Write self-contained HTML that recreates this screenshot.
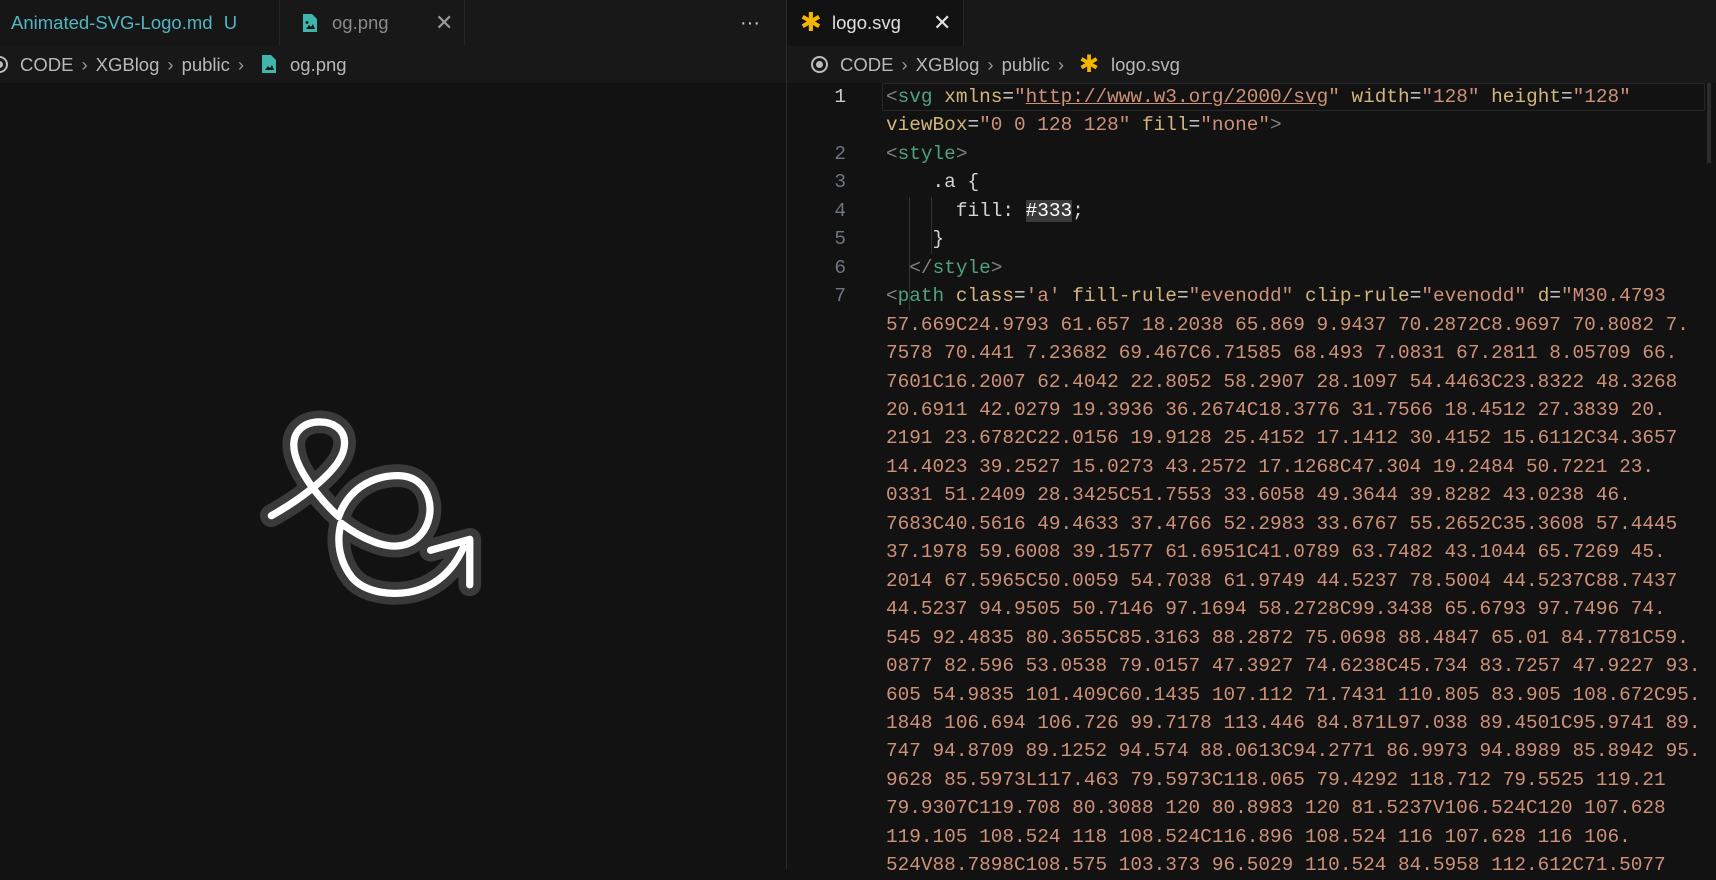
<!DOCTYPE html>
<html><head><meta charset="utf-8"><style>
*{margin:0;padding:0;box-sizing:border-box}
body{width:1716px;height:869px;background:#121212;overflow:hidden;position:relative;font-family:"Liberation Sans",sans-serif;color:#ccc}
.abs{position:absolute}
.tabbar{left:0;top:0;width:1716px;height:46px;background:#181818}
.tab{position:absolute;top:0;height:46px;font-size:18.5px;line-height:46px;white-space:nowrap}
.bc{left:0;top:46px;width:1716px;height:37px;background:#181818;font-size:18.5px;line-height:37px;color:#b8b8b8;white-space:nowrap}
.code{font-family:"Liberation Mono",monospace;font-size:19.4px;line-height:28.45px;white-space:pre;position:absolute;left:886px;top:83px;color:#d4d4d4}
.ln{font-family:"Liberation Mono",monospace;font-size:19.4px;line-height:28.45px;white-space:pre;position:absolute;left:800px;width:46px;text-align:right;top:83px;color:#6e7681}
.p{color:#808080}.t{color:#4ea27d}.a{color:#d3b57e}.s{color:#ce9178}
.sep{color:#999;margin:0 8px}
</style></head><body>
<div class="abs tabbar"></div>
<div class="tab" style="left:0;width:279px;background:#161616;color:#4fb6c2;padding-left:11px">Animated-SVG-Logo.md <span style="margin-left:6px">U</span></div>
<div class="abs" style="left:279px;top:0;width:1px;height:46px;background:#252525"></div>
<div class="tab" style="left:280px;width:184px;color:#8a8a8a">
 <svg class="abs" style="left:22px;top:13px" width="16" height="20" viewBox="0 0 16 20"><path d="M1 1h9l5 5v13H1z" fill="#3fb6ad"/><path d="M4 16l3-4 2 2 2-3 2 5z M5 8a1.5 1.5 0 1 0 .1 0" fill="#161616"/></svg>
 <span class="abs" style="left:52px">og.png</span><span class="abs" style="left:155px;color:#9a9a9a;font-size:22px">✕</span></div>
<div class="abs" style="left:464px;top:0;width:1px;height:46px;background:#252525"></div>
<div class="tab" style="left:740px;color:#ccc;font-size:20px">···</div>
<div class="abs" style="left:786px;top:0;width:1px;height:869px;background:#2a2a2a"></div>
<div class="tab" style="left:787px;width:176px;background:#121212;color:#e0e0e0">
 <span class="abs" style="left:13px;color:#f5b400;font-size:26px;top:-1px">✱</span>
 <span class="abs" style="left:45px">logo.svg</span><span class="abs" style="left:146px;font-size:22px">✕</span></div>
<div class="abs" style="left:963px;top:0;width:1px;height:46px;background:#252525"></div>

<div class="abs bc" style="width:786px"><span class="abs" style="left:-9px;top:10px;width:17px;height:17px;border:2px solid #bbb;border-radius:50%"></span><span class="abs" style="left:-4px;top:15px;width:7px;height:7px;background:#bbb;border-radius:50%"></span>
<span class="abs" style="left:20px">CODE<span class="sep">›</span>XGBlog<span class="sep">›</span>public<span class="sep">›</span></span>
<svg class="abs" style="left:261px;top:8px" width="16" height="20" viewBox="0 0 16 20"><path d="M1 1h9l5 5v13H1z" fill="#3fb6ad"/><path d="M4 16l3-4 2 2 2-3 2 5z" fill="#181818"/></svg>
<span class="abs" style="left:290px">og.png</span></div>
<div class="abs bc" style="left:787px;width:929px"><span class="abs" style="left:24px;top:10px;width:17px;height:17px;border:2px solid #bbb;border-radius:50%"></span><span class="abs" style="left:29px;top:15px;width:7px;height:7px;background:#bbb;border-radius:50%"></span>
<span class="abs" style="left:53px">CODE<span class="sep">›</span>XGBlog<span class="sep">›</span>public<span class="sep">›</span></span>
<span class="abs" style="left:292px;color:#f5b400;font-size:24px">✱</span><span class="abs" style="left:324px">logo.svg</span></div>

<svg class="abs" style="left:0;top:83px" width="786" height="786">
<g transform="translate(255,308) scale(1.82)" fill="none" stroke-linecap="round" stroke-linejoin="round">
<g id="lg">
<path d="M9,68.5 C18,63.5 27,57.5 35,50.5 C44,42.5 49.5,35.5 49.2,28 C49,21 43,16.8 35,17 C27,17.2 21.3,22 21.3,29.5 C21.3,37.5 26.5,46.5 33.5,55.5 C37,60 41,64.5 46,69 C50.5,56 62,46.5 78.5,46.5 C88,46.5 93.5,52 95.3,58.8 C97.3,65.5 95.8,73.5 91,79 C84.5,86.3 75,86.5 65.7,83 C59.5,80.7 53,77 47.3,72.6 C44.5,83 46.5,94 53.5,102.7 C59.5,109.5 71.5,112.5 84.2,110.6 C96,108.7 107.5,101.5 114.5,86 M96.5,87.5 L118,81.5 L118,106.5"/>
</g>
<use href="#lg" stroke="#3a3a3a" stroke-width="12.5"/>
<use href="#lg" stroke="#ffffff" stroke-width="4"/>
</g></svg>

<div class="abs" style="left:882px;top:83px;width:823px;height:28px;border:1px solid #262626"></div>
<div class="abs" style="left:909px;top:197px;width:1px;height:114px;background:#333"></div>
<div class="abs" style="left:931px;top:197px;width:1px;height:57px;background:#333"></div>
<div class="abs" style="left:1707px;top:83px;width:4px;height:80px;background:#2c2c2c"></div>

<div class="ln"><span style="color:#ccc">1</span>

2
3
4
5
6
7</div>
<div class="code"><span class="p">&lt;</span><span class="t">svg</span> <span class="a">xmlns</span>=<span class="s">"<span style="text-decoration:underline">http://www.w3.org/2000/svg</span>"</span> <span class="a">width</span>=<span class="s">"128"</span> <span class="a">height</span>=<span class="s">"128"</span>
<span class="a">viewBox</span>=<span class="s">"0 0 128 128"</span> <span class="a">fill</span>=<span class="s">"none"</span><span class="p">&gt;</span>
<span class="p">&lt;</span><span class="t">style</span><span class="p">&gt;</span>
    .a {
      fill: <span style="background:#3a3a3a;color:#fff">#333</span>;
    }
  <span class="p">&lt;/</span><span class="t">style</span><span class="p">&gt;</span>
<span class="p">&lt;</span><span class="t">path</span> <span class="a">class</span>=<span class="s">'a'</span> <span class="a">fill-rule</span>=<span class="s">"evenodd"</span> <span class="a">clip-rule</span>=<span class="s">"evenodd"</span> <span class="a">d</span>=<span class="s">"M30.4793
57.669C24.9793 61.657 18.2038 65.869 9.9437 70.2872C8.9697 70.8082 7.
7578 70.441 7.23682 69.467C6.71585 68.493 7.0831 67.2811 8.05709 66.
7601C16.2007 62.4042 22.8052 58.2907 28.1097 54.4463C23.8322 48.3268
20.6911 42.0279 19.3936 36.2674C18.3776 31.7566 18.4512 27.3839 20.
2191 23.6782C22.0156 19.9128 25.4152 17.1412 30.4152 15.6112C34.3657
14.4023 39.2527 15.0273 43.2572 17.1268C47.304 19.2484 50.7221 23.
0331 51.2409 28.3425C51.7553 33.6058 49.3644 39.8282 43.0238 46.
7683C40.5616 49.4633 37.4766 52.2983 33.6767 55.2652C35.3608 57.4445
37.1978 59.6008 39.1577 61.6951C41.0789 63.7482 43.1044 65.7269 45.
2014 67.5965C50.0059 54.7038 61.9749 44.5237 78.5004 44.5237C88.7437
44.5237 94.9505 50.7146 97.1694 58.2728C99.3438 65.6793 97.7496 74.
545 92.4835 80.3655C85.3163 88.2872 75.0698 88.4847 65.01 84.7781C59.
0877 82.596 53.0538 79.0157 47.3927 74.6238C45.734 83.7257 47.9227 93.
605 54.9835 101.409C60.1435 107.112 71.7431 110.805 83.905 108.672C95.
1848 106.694 106.726 99.7178 113.446 84.871L97.038 89.4501C95.9741 89.
747 94.8709 89.1252 94.574 88.0613C94.2771 86.9973 94.8989 85.8942 95.
9628 85.5973L117.463 79.5973C118.065 79.4292 118.712 79.5525 119.21
79.9307C119.708 80.3088 120 80.8983 120 81.5237V106.524C120 107.628
119.105 108.524 118 108.524C116.896 108.524 116 107.628 116 106.
524V88.7898C108.575 103.373 96.5029 110.524 84.5958 112.612C71.5077</span></div>
</body></html>
